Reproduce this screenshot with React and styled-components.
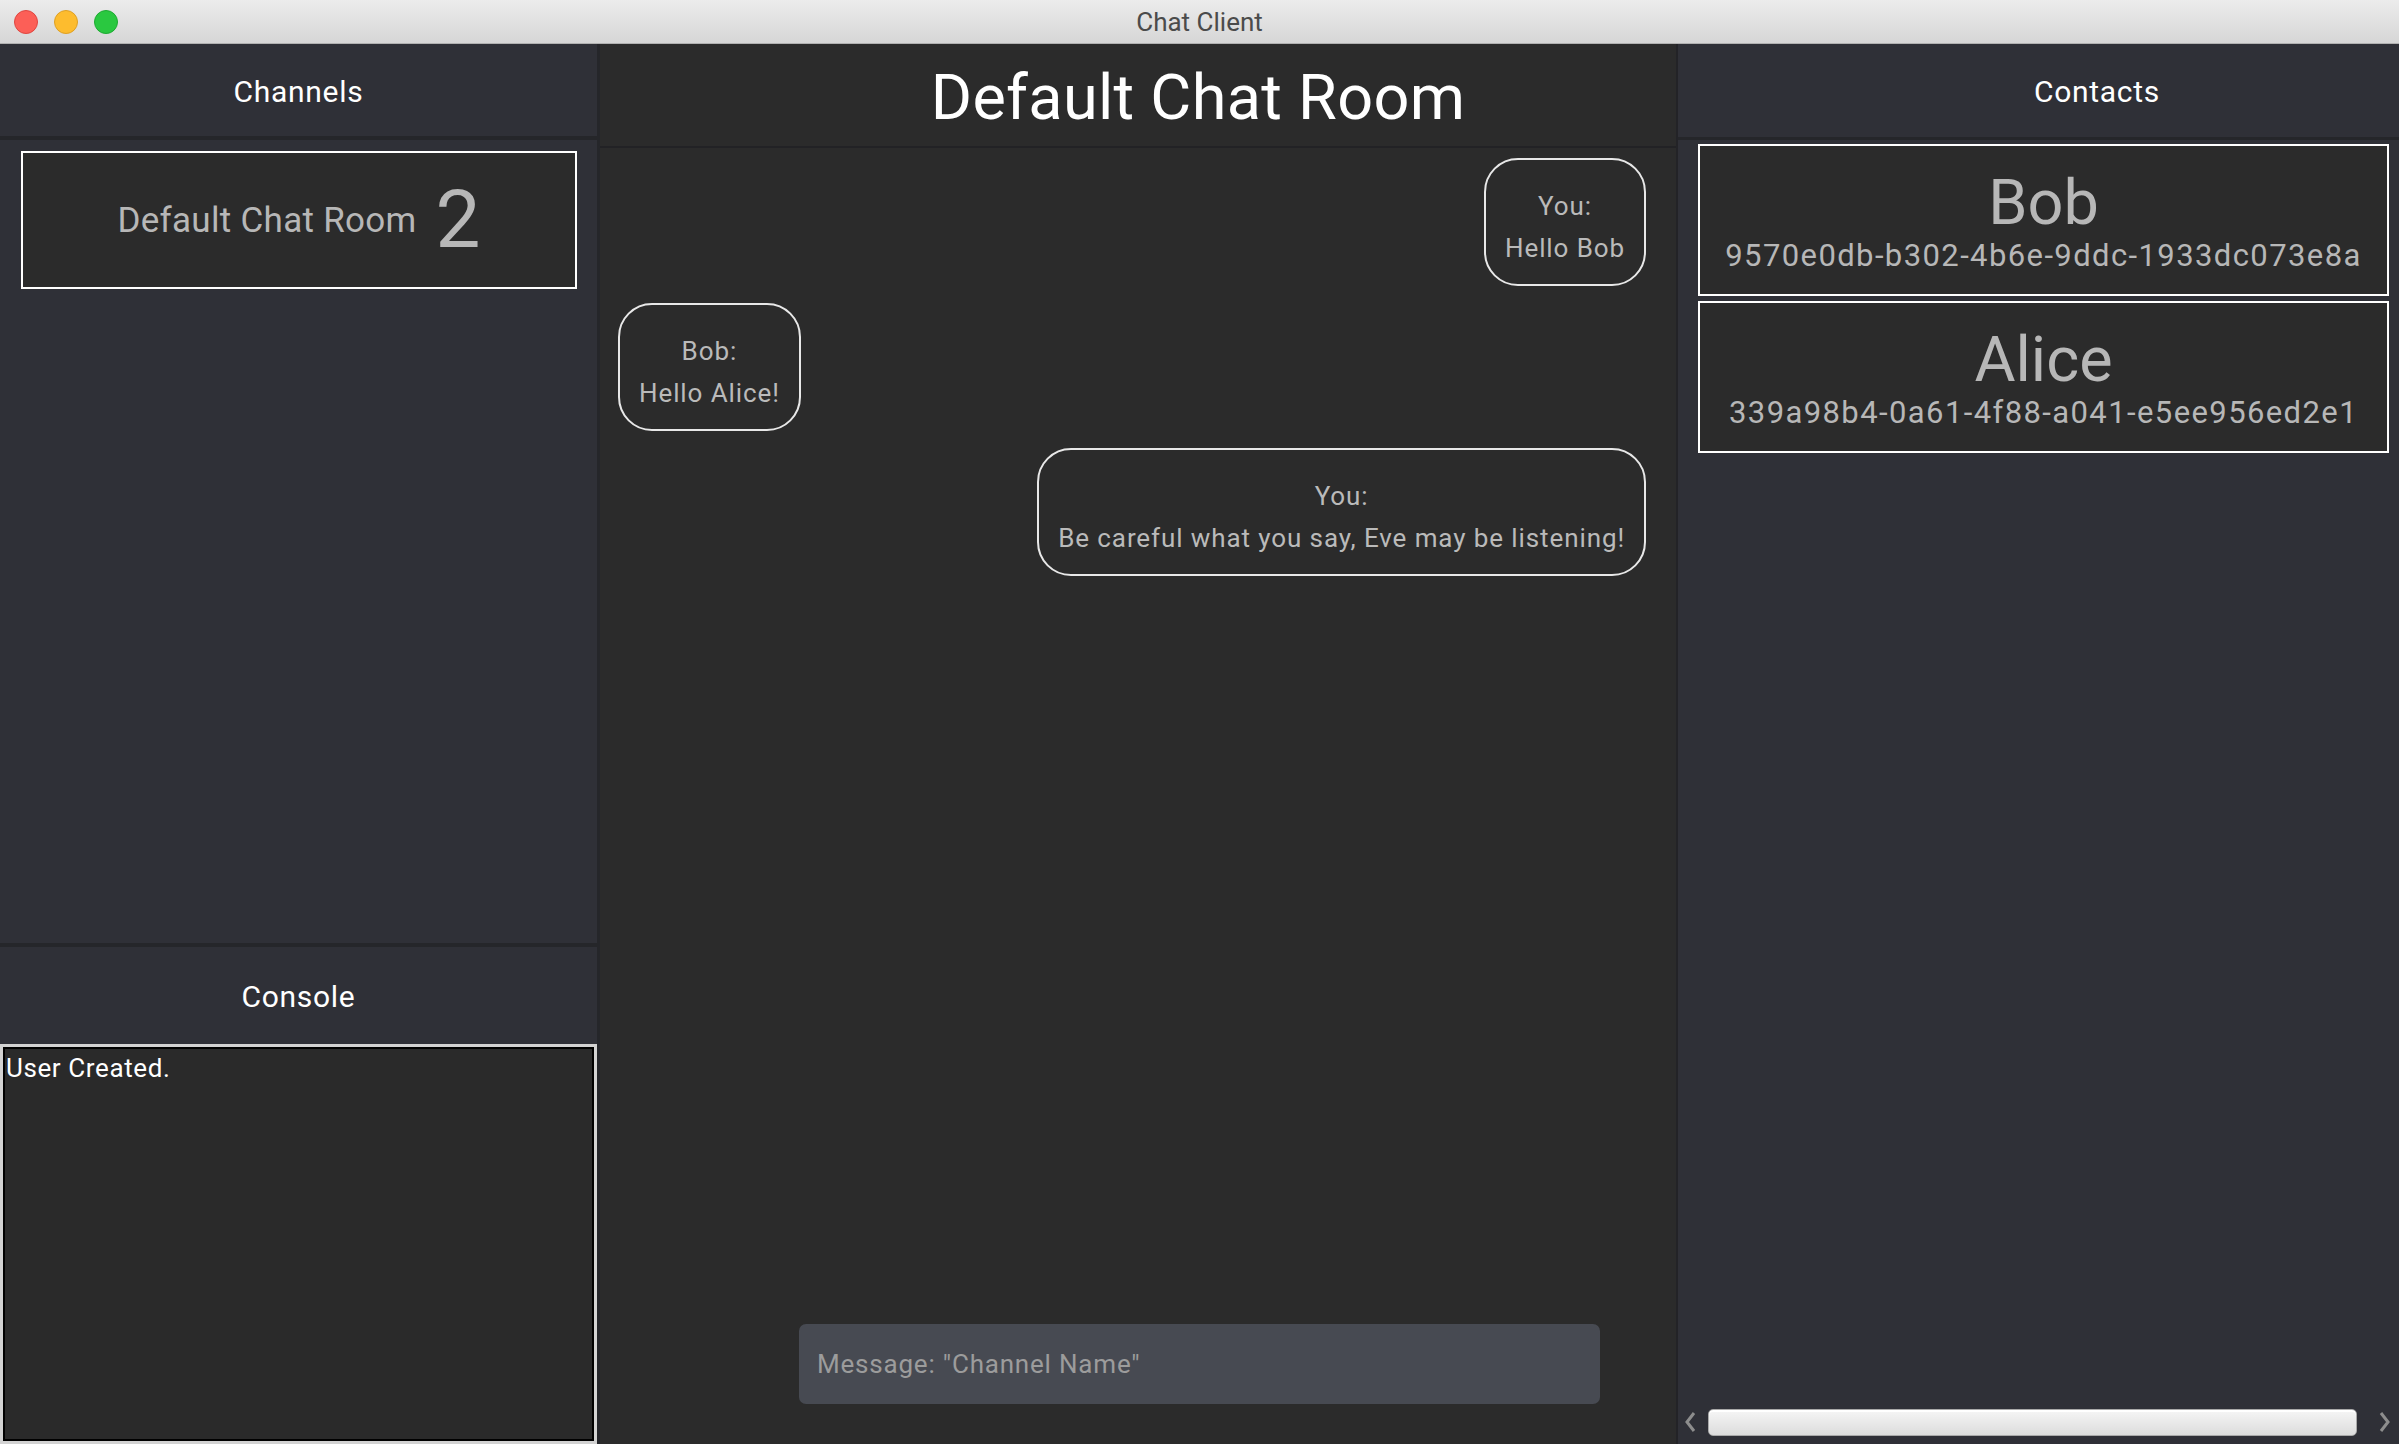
import styled, { createGlobalStyle } from "styled-components";

const GlobalStyle = createGlobalStyle`
  html, body {
    margin: 0;
    padding: 0;
    background: #2b2b2b;
    overflow: hidden;
  }
  * {
    box-sizing: border-box;
  }
`;

const StyledWindow = styled.div`
  width: 100vw;
  height: 100vh;
  display: flex;
  flex-direction: column;
  font-family: Roboto, "Liberation Sans", sans-serif;
`;

const StyledTitleBar = styled.div`
  height: 44px;
  flex: none;
  display: grid;
  grid-template-columns: 1fr auto 1fr;
  align-items: center;
  background: linear-gradient(#ececec, #d6d6d6);
  border-bottom: 1px solid #b1b1b1;
`;

const StyledLights = styled.div`
  display: flex;
  gap: 16px;
  padding-left: 14px;
`;

const StyledLight = styled.span`
  width: 24px;
  height: 24px;
  border-radius: 50%;
  background: ${(props) => props.color};
  border: 1px solid ${(props) => props.edge};
`;

const StyledWindowTitle = styled.div`
  font-size: 26px;
  color: #4b4b4b;
`;

const StyledBody = styled.div`
  flex: 1;
  min-height: 0;
  display: flex;
`;

const StyledLeftColumn = styled.div`
  width: 600px;
  flex: none;
  display: flex;
  flex-direction: column;
  background: #2f3037;
  border-right: 3px solid #25262a;
`;

const StyledPanelHeader = styled.div`
  height: ${(props) => props.height};
  flex: none;
  display: flex;
  align-items: center;
  justify-content: center;
  padding-top: 2px;
  padding-left: ${(props) => props.shift || "0"};
  font-size: 30px;
  letter-spacing: 0.7px;
  color: #ffffff;
  background: #2f3037;
  border-bottom: ${(props) => props.under || "0"} solid #25262a;
`;

const StyledChannelList = styled.div`
  flex: 1;
  padding: 11px 20px 0 21px;
  border-bottom: 4px solid #25262a;
`;

const StyledChannelCard = styled.div`
  height: 138px;
  display: flex;
  align-items: center;
  justify-content: center;
  gap: 19px;
  background: #2b2b2b;
  border: 2px solid #ffffff;
  color: #b7b7b7;
`;

const StyledChannelName = styled.span`
  font-size: 35px;
  letter-spacing: 0.3px;
`;

const StyledChannelCount = styled.span`
  font-size: 80px;
  line-height: 1;
`;

const StyledConsole = styled.div`
  height: 400px;
  flex: none;
  padding: 6px 3px;
  background: #2a2a2a;
  border: 3px solid #d2d2d2;
  box-shadow: inset 0 0 0 2px #000000;
  font-size: 26px;
  line-height: 30px;
  letter-spacing: 0.6px;
  color: #ffffff;
`;

const StyledCenterColumn = styled.div`
  flex: 1;
  min-width: 0;
  display: flex;
  flex-direction: column;
  background: #2b2b2b;
`;

const StyledRoomTitle = styled.div`
  height: 104px;
  flex: none;
  display: flex;
  align-items: center;
  justify-content: center;
  padding: 4px 0 0 120px;
  font-size: 63px;
  letter-spacing: 0.3px;
  color: #ffffff;
  border-bottom: 2px solid #222225;
`;

const StyledMessages = styled.div`
  flex: 1;
  display: flex;
  flex-direction: column;
  gap: 17px;
  padding: 10px 30px 0 18px;
`;

const StyledMessageRow = styled.div`
  display: flex;
  justify-content: ${(props) => (props.$mine ? "flex-end" : "flex-start")};
`;

const StyledBubble = styled.div`
  padding: 25px 19px 15px;
  border: 2px solid #e8e8e8;
  border-radius: 34px;
  text-align: center;
  font-size: 26px;
  line-height: 42px;
  letter-spacing: 0.9px;
  color: #bababa;
  white-space: nowrap;
`;

const StyledInputBox = styled.div`
  flex: none;
  padding: 0 76px 40px 199px;
`;

const StyledInput = styled.input`
  width: 100%;
  height: 80px;
  padding: 0 18px;
  border: none;
  outline: none;
  border-radius: 7px;
  background: #474a52;
  font-family: Roboto, "Liberation Sans", sans-serif;
  font-size: 26px;
  letter-spacing: 0.8px;
  color: #dddddd;

  &::placeholder {
    color: #9c9c9c;
  }
`;

const StyledRightColumn = styled.div`
  width: 723px;
  flex: none;
  display: flex;
  flex-direction: column;
  background: #2f3037;
  border-left: 2px solid #232327;
`;

const StyledContactList = styled.div`
  flex: 1;
  display: flex;
  flex-direction: column;
  gap: 5px;
  padding: 4px 10px 0 20px;
`;

const StyledContactCard = styled.div`
  display: flex;
  flex-direction: column;
  align-items: center;
  padding: 26px 0 20px;
  gap: 4px;
  background: #2b2b2b;
  border: 2px solid #ffffff;
  color: #b7b7b7;
`;

const StyledContactName = styled.div`
  font-size: 63px;
  line-height: 62px;
`;

const StyledContactId = styled.div`
  font-size: 31px;
  line-height: 36px;
  letter-spacing: 1.4px;
`;

const StyledScrollBar = styled.div`
  margin-top: auto;
  margin-left: -14px;
  margin-right: -2px;
  height: 40px;
  display: flex;
  align-items: center;
  gap: 11px;
  padding: 0 0 4px;
`;

const StyledThumb = styled.div`
  flex: 1;
  height: 27px;
  margin-right: 10px;
  border-radius: 5px;
  border: 1px solid #a9a9a9;
  background: linear-gradient(#f6f6f6, #dcdcdc);
  box-shadow: inset 0 2px 0 #ffffff;
`;

const StyledArrow = styled.svg`
  width: 13px;
  height: 22px;
  flex: none;
`;

function Arrow({ dir }) {
  const d = dir === "left" ? "M10 2 L3 11 L10 20" : "M3 2 L10 11 L3 20";
  return (
    <StyledArrow viewBox="0 0 13 22">
      <path d={d} fill="none" stroke="#8d8d8d" strokeWidth="3" />
    </StyledArrow>
  );
}

const messages = [
  { who: "You", text: "Hello Bob", mine: true },
  { who: "Bob", text: "Hello Alice!", mine: false },
  { who: "You", text: "Be careful what you say, Eve may be listening!", mine: true },
];

const contacts = [
  { name: "Bob", id: "9570e0db-b302-4b6e-9ddc-1933dc073e8a" },
  { name: "Alice", id: "339a98b4-0a61-4f88-a041-e5ee956ed2e1" },
];

function App() {
  return (
    <StyledWindow>
      <GlobalStyle />
      <StyledTitleBar>
        <StyledLights>
          <StyledLight color="#fc5f57" edge="#df4640" />
          <StyledLight color="#fdbc2e" edge="#dea024" />
          <StyledLight color="#2ac840" edge="#1eaa32" />
        </StyledLights>
        <StyledWindowTitle>Chat Client</StyledWindowTitle>
      </StyledTitleBar>
      <StyledBody>
        <StyledLeftColumn>
          <StyledPanelHeader height="96px" under="4px">
            Channels
          </StyledPanelHeader>
          <StyledChannelList>
            <StyledChannelCard>
              <StyledChannelName>Default Chat Room</StyledChannelName>
              <StyledChannelCount>2</StyledChannelCount>
            </StyledChannelCard>
          </StyledChannelList>
          <StyledPanelHeader height="97px">Console</StyledPanelHeader>
          <StyledConsole>User Created.</StyledConsole>
        </StyledLeftColumn>
        <StyledCenterColumn>
          <StyledRoomTitle>Default Chat Room</StyledRoomTitle>
          <StyledMessages>
            {messages.map((m, i) => (
              <StyledMessageRow key={i} $mine={m.mine}>
                <StyledBubble>
                  {m.who}:
                  <br />
                  {m.text}
                </StyledBubble>
              </StyledMessageRow>
            ))}
          </StyledMessages>
          <StyledInputBox>
            <StyledInput readOnly placeholder='Message: "Channel Name"' />
          </StyledInputBox>
        </StyledCenterColumn>
        <StyledRightColumn>
          <StyledPanelHeader height="96px" under="3px" shift="117px">
            Contacts
          </StyledPanelHeader>
          <StyledContactList>
            {contacts.map((c) => (
              <StyledContactCard key={c.id}>
                <StyledContactName>{c.name}</StyledContactName>
                <StyledContactId>{c.id}</StyledContactId>
              </StyledContactCard>
            ))}
            <StyledScrollBar>
              <Arrow dir="left" />
              <StyledThumb />
              <Arrow dir="right" />
            </StyledScrollBar>
          </StyledContactList>
        </StyledRightColumn>
      </StyledBody>
    </StyledWindow>
  );
}

export default App;
